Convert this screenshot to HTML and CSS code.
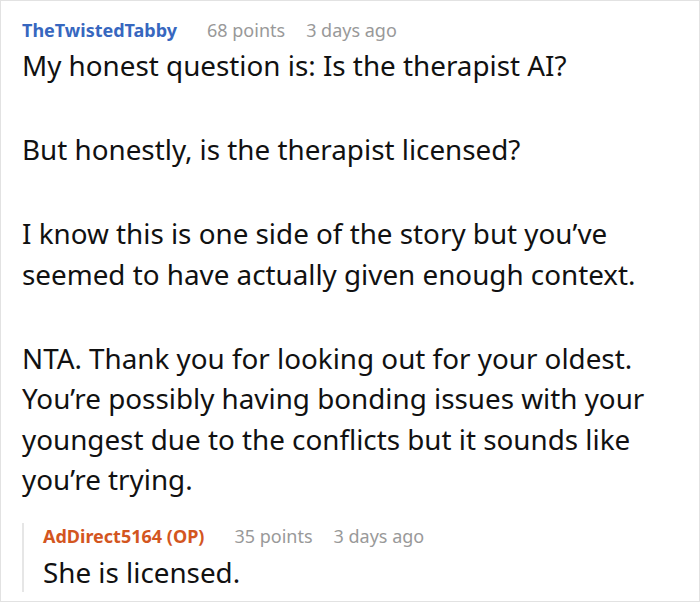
FILE: index.html
```html
<!DOCTYPE html>
<html>
<head>
<meta charset="utf-8">
<link rel="stylesheet" href="styles.css">
</head>
<body>
<div class="frame">
  <div class="comment">
    <div class="meta">
      <span class="author">TheTwistedTabby</span>
      <span class="points">68 points</span>
      <span class="time">3 days ago</span>
    </div>
    <div class="body">
      <p>My honest question is: Is the therapist AI?</p>
      <p>But honestly, is the therapist licensed?</p>
      <p>I know this is one side of the story but you’ve seemed to have actually given enough context.</p>
      <p>NTA. Thank you for looking out for your oldest. You’re possibly having bonding issues with your youngest due to the conflicts but it sounds like you’re trying.</p>
    </div>
    <div class="reply">
      <div class="meta">
        <span class="author op">AdDirect5164 (OP)</span>
        <span class="points">35 points</span>
        <span class="time">3 days ago</span>
      </div>
      <div class="body">
        <p>She is licensed.</p>
      </div>
    </div>
  </div>
</div>
</body>
</html>
```
FILE: styles.css
```css
html, body {
  margin: 0;
  padding: 0;
  background: #fff;
}
.frame {
  width: 700px;
  height: 602px;
  box-sizing: border-box;
  border: 1px solid #e2e2e2;
  font-family: "Noto Sans", "Open Sans", sans-serif;
  color: #111;
  overflow: hidden;
}
.comment {
  padding: 16px 0 0 21px;
}
.meta {
  display: flex;
  align-items: baseline;
  font-size: 18px;
  line-height: 26px;
}
.author {
  font-weight: 700;
  color: #3767bf;
  margin-right: 30px;
}
.author.op {
  color: #d3561f;
}
.points {
  color: #999;
  margin-right: 21px;
}
.time {
  color: #999;
}
.body {
  font-size: 27.8px;
  line-height: 40.5px;
  padding-right: 25px;
  margin-top: 2px;
}
.reply .body {
  margin-top: 3px;
}
.body p {
  margin: 0 0 43.5px;
}
.body p:last-child {
  margin-bottom: 0;
}
.reply {
  margin-top: 23px;
  border-left: 2px solid #e6e6e6;
  padding-left: 19px;
}
```
